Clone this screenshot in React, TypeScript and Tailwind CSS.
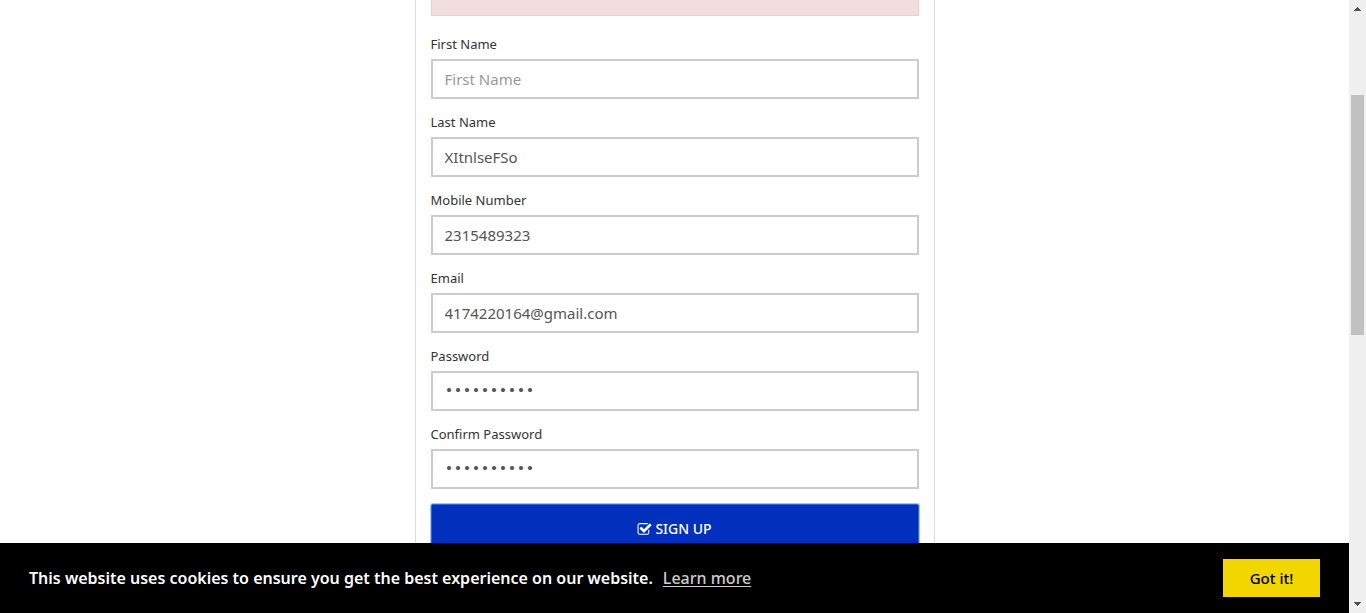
import React from "react";

type Field = {
  id: string;
  label: string;
  type: string;
  value?: string;
  placeholder?: string;
};

const fields: Field[] = [
  { id: "first-name", label: "First Name", type: "text", placeholder: "First Name" },
  { id: "last-name", label: "Last Name", type: "text", value: "XItnlseFSo" },
  { id: "mobile", label: "Mobile Number", type: "tel", value: "2315489323" },
  { id: "email", label: "Email", type: "email", value: "4174220164@gmail.com" },
  { id: "password", label: "Password", type: "password", value: "abcdefghij" },
  { id: "confirm", label: "Confirm Password", type: "password", value: "abcdefghij" },
];

function CheckSquareIcon() {
  return (
    <svg viewBox="0 0 1792 1792" className="size-[15px]" fill="currentColor" aria-hidden="true">
      <path d="M1472 930v318q0 119-84.5 203.5t-203.5 84.5h-832q-119 0-203.5-84.5t-84.5-203.5v-832q0-119 84.5-203.5t203.5-84.5h832q63 0 117 25 15 7 18 23 3 17-9 29l-49 49q-10 10-23 10-3 0-9-2-23-6-45-6h-832q-66 0-113 47t-47 113v832q0 66 47 113t113 47h832q66 0 113-47t47-113v-254q0-13 9-22l64-64q10-10 23-10 6 0 12 3 20 8 20 29zm231-489l-814 814q-24 24-57 24t-57-24l-430-430q-24-24-24-57t24-57l110-110q24-24 57-24t57 24l263 263 647-647q24-24 57-24t57 24l110 110q24 24 24 57t-24 57z" />
    </svg>
  );
}

function FormField({ field }: { field: Field }) {
  const font =
    field.type === "password"
      ? "font-['Liberation_Mono',monospace]"
      : "font-['Noto_Sans',sans-serif]";
  return (
    <div className="mb-3 flex flex-col">
      <label htmlFor={field.id} className="mb-1 text-[13px] leading-[22px] text-[#333]">
        {field.label}
      </label>
      <input
        id={field.id}
        type={field.type}
        defaultValue={field.value}
        placeholder={field.placeholder}
        className={`h-10 w-full border-2 border-[#ccc] bg-white px-3 text-[15px] text-[#555] outline-none placeholder:text-[#999] ${font}`}
      />
    </div>
  );
}

function SignUpForm() {
  return (
    <form className="mx-auto w-full max-w-[520px] border-x border-[#ddd] px-[15px]">
      <div className="mb-[17px] h-4 border border-t-0 border-[#ebccd1] bg-[#f2dede]" />
      {fields.map((field) => (
        <FormField key={field.id} field={field} />
      ))}
      <button
        type="button"
        className="mt-[15px] flex h-[50px] w-full items-center justify-center gap-[3px] rounded-[2px] border border-[#2e62d9] bg-[#0030bc] text-sm font-medium text-white ring-1 ring-[#a9c3f7]"
      >
        <CheckSquareIcon />
        SIGN UP
      </button>
    </form>
  );
}

function CookieBar() {
  return (
    <div className="absolute inset-x-0 bottom-0 flex h-[70px] items-center justify-between bg-black pr-[29px] pl-[29px] text-base text-white">
      <p className="flex gap-2.5 font-medium">
        <span className="font-semibold">
          This website uses cookies to ensure you get the best experience on our website.
        </span>
        <a href="#cookies" className="text-[#ccc] underline underline-offset-2">
          Learn more
        </a>
      </p>
      <button type="button" className="h-[38px] w-[97px] bg-[#f1d600] text-[15px] font-medium text-black">
        Got it!
      </button>
    </div>
  );
}

function ScrollTrack() {
  return (
    <div className="flex w-[17px] shrink-0 flex-col items-center justify-between bg-[#f0f0f0] text-[#505050]">
      <svg viewBox="0 0 17 17" className="size-[17px]" fill="currentColor" aria-hidden="true">
        <path d="M5 11h7v-1h-1V9h-1V8H9V7H8v1H7v1H6v1H5z" />
      </svg>
      <div className="flex w-full flex-1 flex-col items-center">
        <div className="basis-[13.5%]" />
        <div className="w-[13px] basis-[41.5%] bg-[#c1c1c1]" />
      </div>
      <svg viewBox="0 0 17 17" className="size-[17px]" fill="currentColor" aria-hidden="true">
        <path d="M5 6h7v1h-1v1h-1v1H9v1H8V9H7V8H6V7H5z" />
      </svg>
    </div>
  );
}

export default function App() {
  return (
    <div className="flex h-screen overflow-hidden bg-white font-['Noto_Sans',sans-serif]">
      <main className="relative min-w-0 flex-1 overflow-hidden">
        <SignUpForm />
        <CookieBar />
      </main>
      <ScrollTrack />
    </div>
  );
}
